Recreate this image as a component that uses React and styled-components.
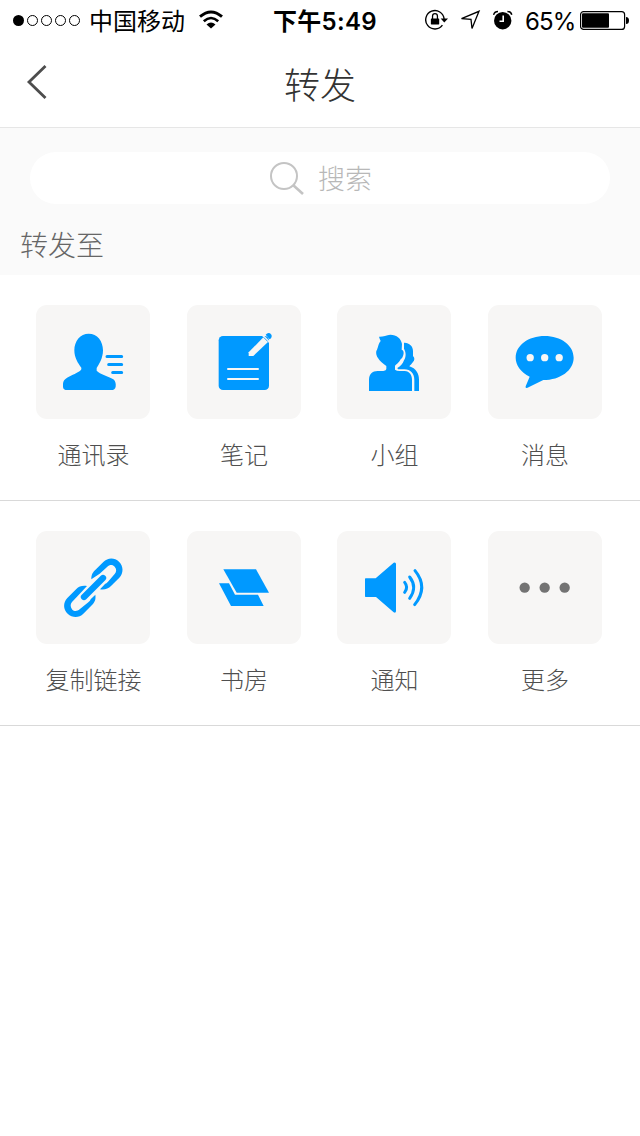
import React from 'react';
import styled, { createGlobalStyle } from 'styled-components';

const BLUE = '#0099ff';

const GlobalStyle = createGlobalStyle`
  body {
    margin: 0;
    background: #fff;
    font-family: Inter, "Noto Sans CJK SC", sans-serif;
  }
`;

const Screen = styled.div`
  width: 640px;
  min-height: 1136px;
  background: #fff;
`;

const StatusBar = styled.div`
  display: flex;
  align-items: center;
  height: 40px;
  color: #000;
  font-size: 24px;
  line-height: 40px;
  white-space: nowrap;
  svg { display: block; flex: none; }
`;

const StatusLeft = styled.div`
  display: flex;
  align-items: center;
  box-sizing: border-box;
  width: 273px;
  padding-left: 12px;
`;

const Carrier = styled.span`
  width: 96px;
  margin: 0 12.5px 0 8px;
  padding-top: 3px;
`;

const Time = styled.span`
  flex: 1;
  padding-top: 3px;
  font-weight: 600;
  font-size: 24px;
  letter-spacing: 0.3px;
`;

const StatusRight = styled.div`
  display: flex;
  align-items: center;
  gap: 12px;
  padding-right: 10px;
`;

const Percent = styled.span`
  width: 50px;
  margin-right: -7px;
  padding-top: 3px;
  font-size: 24px;
  letter-spacing: -0.9px;
`;

const NavBar = styled.header`
  display: grid;
  grid-template-columns: 80px 1fr 80px;
  align-items: center;
  height: 87px;
  border-bottom: 1px solid #e6e6e6;
`;

const BackButton = styled.button`
  display: flex;
  padding: 0 0 4px 24px;
  border: 0;
  background: none;
`;

const Title = styled.h1`
  margin: 0;
  padding-top: 4px;
  color: #333;
  font-size: 36px;
  font-weight: 300;
  line-height: 52px;
  text-align: center;
`;

const SearchSection = styled.section`
  box-sizing: border-box;
  height: 147px;
  padding: 24px 30px 0 20px;
  background: #fafafa;
`;

const SearchField = styled.div`
  display: flex;
  align-items: center;
  box-sizing: border-box;
  height: 52px;
  margin-left: 10px;
  padding-left: 238px;
  gap: 12px;
  border-radius: 26px;
  background: #fff;
  color: #b8b8b8;
  font-size: 27px;
  font-weight: 300;
`;

const SearchHint = styled.span`
  padding-bottom: 2px;
`;

const SectionLabel = styled.h2`
  margin: 22px 0 0;
  color: #666;
  font-size: 28px;
  font-weight: 300;
  line-height: 40px;
`;

const TargetRow = styled.div`
  display: grid;
  grid-template-columns: repeat(4, 114px);
  column-gap: 36.5px;
  box-sizing: border-box;
  height: ${(p) => p.$height}px;
  padding: 30px 0 0 36.4px;
  border-bottom: 1px solid #d9d9d9;
`;

const Target = styled.div`
  display: flex;
  flex-direction: column;
  align-items: center;
`;

const Tile = styled.div`
  width: 114px;
  height: ${(p) => p.$height}px;
  border-radius: 11px;
  background: #f7f6f5;
  svg { display: block; }
`;

const TargetLabel = styled.span`
  margin-top: 19px;
  color: #4f4f4f;
  font-size: 24px;
  font-weight: 300;
  line-height: 36px;
  white-space: nowrap;
`;

const Glyph = ({ box, children }) => (
  <svg width="114" height="114" viewBox={box} fill={BLUE}>{children}</svg>
);

const ContactsIcon = () => (
  <Glyph box="18 15 342 342">
    <path d="M176 101C202 101 219 123 219 151C219 175 207 193 200 204V212C210 223 235 228 250 238C257 244 258 252 257 260Q255 270 244 270H112Q99 270 99 260V252C99 235 120 229 134 222C146 216 151 213 154 208V203C144 190 133 173 133 151C133 123 151 101 176 101Z" />
    <path d="M231 169.500H275M236 193.500H275M248 217.500H275" stroke={BLUE} strokeWidth="9" strokeLinecap="round" />
  </Glyph>
);

const NotesIcon = () => (
  <Glyph box="21 15 342 342">
    <rect x="116" y="108" width="151" height="162" rx="13" />
    <path d="M206 157L250 112L264 126L220 168H206Z" fill="#f7f6f5" />
    <path d="M246 104L272 130" stroke="#f7f6f5" strokeWidth="5" />
    <path d="M251 112L263 124" stroke={BLUE} strokeWidth="2" />
    <path d="M257 104Q263 97 270 100Q277 105 275 110Q274 115 269 118Z" />
    <path d="M144 207H234M144 237H234" stroke="#f7f6f5" strokeWidth="6" strokeLinecap="round" />
  </Glyph>
);

const GroupIcon = () => (
  <Glyph box="21 15 342 342">
    <path d="M147 110C158 111 169 105 181 104C200 104 214 116 216 132L215 149C222 151 222 160 219 168Q217 175 212 178C207 188 199 193 195 197V209Q200 213 209 213H224C239 214 246 225 246 239V273H117V239C117 222 127 213 143 213H160Q169 212 169 207V198C158 191 148 181 144 174C138 166 137 153 141 149C145 139 146 129 152 123Q149 117 147 110Z" />
    <path d="M222 128C237 127 249 138 249 153V168C255 174 254 181 249 186C245 192 241 195 238 199C258 205 267 221 267 239V273H253V240C253 220 242 209 223 208H204L202 204C212 198 218 192 222 181C229 170 228 157 222 146Z" />
  </Glyph>
);

const MessageIcon = () => (
  <Glyph box="24 15 342 342">
    <path d="M194 108C243 108 281 136 281 173C281 211 241 240 190 240L141 264Q135 265 137 259L149 230C123 217 107 196 107 173C107 136 145 108 194 108Z" />
    <g fill="#f7f6f5">
      <circle cx="150.500" cy="173" r="11" />
      <circle cx="194" cy="173" r="11" />
      <circle cx="237.500" cy="173" r="11" />
    </g>
  </Glyph>
);

const LinkIcon = () => (
  <Glyph box="18 33 342 342">
    <path d="M184 178C184 164 188 158 195 151L220 126C233 112 254 112 267 125C281 139 281 159 268 173L243 198C235 206 225 210 210 208L225 192Q229 190 234 185L254 162C260 155 260 146 254 140C248 133 238 134 232 140L209 161Z" />
    <path d="M171 198C157 196 147 199 139 207L112 234C99 248 99 268 113 281C127 294 147 294 160 281L186 255C195 245 198 238 196 224L182 238Q181 242 175 247L149 268C142 274 132 274 127 269C121 262 120 253 126 246L148 223Z" />
    <path d="M162 231L219 174" stroke={BLUE} strokeWidth="19" strokeLinecap="round" />
  </Glyph>
);

const StudyIcon = () => (
  <Glyph box="21 33 342 342">
    <path d="M130 148H228L267 218H170Z" />
    <path d="M117 190H147L165 224H234L251 258H153Z" />
  </Glyph>
);

const NoticeIcon = () => (
  <Glyph box="21 33 342 342">
    <path d="M107 175H137L191 128Q198 126 198 132V274Q197 281 191 277L138 231H107Q105 231 105 229V177Q105 175 107 175Z" />
    <g fill="none" stroke={BLUE} strokeWidth="9" strokeLinecap="round">
      <path d="M224 187Q236 202 224 217" />
      <path d="M239 171Q263 202 239 235" />
      <path d="M255 152Q296 202 254 254" />
    </g>
  </Glyph>
);

const MoreIcon = () => (
  <Glyph box="24 33 342 342">
    <g fill="#737373">
      <circle cx="134" cy="203" r="15.500" />
      <circle cx="194" cy="203" r="15.500" />
      <circle cx="254" cy="203" r="15.500" />
    </g>
  </Glyph>
);

const SignalDots = () => (
  <svg width="69" height="12" viewBox="0 0 69 12">
    <circle cx="6.500" cy="6.500" r="5.500" />
    {[20.5, 34.5, 48.5, 62.5].map((x) => (
      <circle key={x} cx={x} cy="6.500" r="5" fill="none" stroke="#000" />
    ))}
  </svg>
);

const WifiIcon = () => (
  <svg width="26" height="20" viewBox="0 0 26 20" fill="none" stroke="#000">
    <path d="M2 6.700Q13-2.800 24 6.700" strokeWidth="2.900" />
    <path d="M5.800 11.200Q13 4.800 20.200 11.200" strokeWidth="2.600" />
    <path d="M8.500 14.400Q13 10.500 17.500 14.400L13 18.500Z" fill="#000" stroke="none" />
  </svg>
);

const RotationLockIcon = () => (
  <svg width="23" height="22" viewBox="0 0 23.500 22">
    <path d="M17.800 16.200A9.400 9.400 0 1 1 19.500 10" fill="none" stroke="#000" strokeWidth="1.400" />
    <path d="M16 9.500H23.500L19.700 13.500Z" />
    <rect x="6" y="9.500" width="8.500" height="6.200" rx=".5" />
    <path d="M7.700 10V7A2.500 2.500 0 0 1 12.700 7V10" fill="none" stroke="#000" strokeWidth="1.300" />
  </svg>
);

const LocationIcon = () => (
  <svg width="21" height="21" viewBox="0 0 21 21">
    <path d="M1.500 8.700L19 1.300L12 18.500L11 9.400Z" fill="none" stroke="#000" strokeWidth="1.300" />
  </svg>
);

const AlarmIcon = () => (
  <svg width="20" height="20" viewBox="0 0 20 20">
    <circle cx="9.700" cy="10.700" r="8.700" />
    <path d="M.6 4.800Q1.500 1.500 5 1.500M14.400 1.500Q18 1.500 18.800 4.800" fill="none" stroke="#000" strokeWidth="1.500" />
    <path d="M10.200 5.500V11.300H6.500" fill="none" stroke="#fff" strokeWidth="1.600" />
  </svg>
);

const BatteryIcon = () => (
  <svg width="50" height="20" viewBox="0 0 50 20">
    <rect x=".6" y="1.600" width="44" height="17.800" rx="3" fill="none" stroke="#000" strokeWidth="1.200" />
    <rect x="2" y="3.300" width="27" height="14.500" rx="1" />
    <path d="M46 7Q49 7 49 10.500Q49 14 46 14Z" />
  </svg>
);

const rows = [
  {
    height: 226,
    tile: 114,
    items: [
      ['通讯录', ContactsIcon],
      ['笔记', NotesIcon],
      ['小组', GroupIcon],
      ['消息', MessageIcon],
    ],
  },
  {
    height: 225,
    tile: 113,
    items: [
      ['复制链接', LinkIcon],
      ['书房', StudyIcon],
      ['通知', NoticeIcon],
      ['更多', MoreIcon],
    ],
  },
];

export default function App() {
  return (
    <Screen>
      <GlobalStyle />
      <StatusBar>
        <StatusLeft>
          <SignalDots />
          <Carrier>中国移动</Carrier>
          <WifiIcon />
        </StatusLeft>
        <Time>下午5:49</Time>
        <StatusRight>
          <RotationLockIcon />
          <LocationIcon />
          <AlarmIcon />
          <Percent>65%</Percent>
          <BatteryIcon />
        </StatusRight>
      </StatusBar>
      <NavBar>
        <BackButton aria-label="返回">
          <svg width="24" height="38" viewBox="0 0 24 38" fill="none" stroke="#4d4d4d" strokeWidth="2.800">
            <path d="M21.500 3L5 19L21.500 35" />
          </svg>
        </BackButton>
        <Title>转发</Title>
      </NavBar>
      <SearchSection>
        <SearchField>
          <svg width="38" height="36" viewBox="0 0 38 36" fill="none" stroke="#c4c4c4" strokeWidth="2">
            <circle cx="16" cy="16" r="13" />
            <path d="M25 25L35 34" strokeWidth="2.600" />
          </svg>
          <SearchHint>搜索</SearchHint>
        </SearchField>
        <SectionLabel>转发至</SectionLabel>
      </SearchSection>
      {rows.map((row) => (
        <TargetRow key={row.height} $height={row.height}>
          {row.items.map(([name, Icon]) => (
            <Target key={name}>
              <Tile $height={row.tile}><Icon /></Tile>
              <TargetLabel>{name}</TargetLabel>
            </Target>
          ))}
        </TargetRow>
      ))}
    </Screen>
  );
}
